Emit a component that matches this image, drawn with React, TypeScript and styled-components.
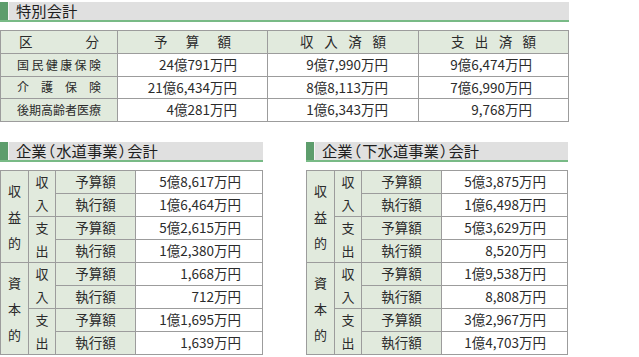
import React from "react";
import styled, { createGlobalStyle } from "styled-components";

const Global = createGlobalStyle`
  html, body { margin: 0; padding: 0; background: #fff; }
  body {
    font-family: "Noto Sans CJK JP", "Noto Sans", sans-serif;
    color: #2b2b2b;
  }
`;

const Page = styled.div`
  width: 639px;
  height: 357px;
  box-sizing: border-box;
  padding-top: 2px;
  display: flex;
  flex-direction: column;
  gap: 20px;
  overflow: hidden;
`;

const Row = styled.div`
  display: flex;
  gap: 43px;
`;

const Section = styled.section<{ $w: number }>`
  width: ${(p) => p.$w}px;
  display: flex;
  flex-direction: column;
  gap: 8px;
`;

const Heading = styled.h2`
  margin: 0;
  height: 18px;
  display: flex;
  align-items: center;
  background: #e0e0e0;
  border-bottom: 2px solid #78ba86;
  font-size: 15.3px;
  font-weight: 400;
  color: #1e1e1e;
  line-height: 1;
  &::before {
    content: "";
    align-self: stretch;
    width: 8px;
    background: #5d9d6c;
    border-right: 1px solid #f4f4f4;
    margin-right: 7px;
  }
`;

const Title = styled.span`
  white-space: nowrap;
  line-height: 1;
`;

const Paren = styled.span`
  font-feature-settings: "halt" 1;
  padding: 0 1px;
`;

const Table = styled.table`
  width: 100%;
  border-collapse: collapse;
  table-layout: fixed;
  border: 1px solid #858585;
  font-size: 13.5px;
  line-height: 1;
`;

const Tr = styled.tr<{ $h: number }>`
  height: ${(p) => p.$h}px;
`;

const Cell = styled.td<{ $label?: boolean; $pr?: number; $align?: string }>`
  border: 1px solid #9c9c9c;
  padding: 0 ${(p) => p.$pr ?? 0}px 0 0;
  background: ${(p) => (p.$label ? "#e1eadd" : "#fff")};
  text-align: ${(p) => p.$align ?? "center"};
  vertical-align: middle;
  color: #2b2b2b;
  white-space: nowrap;
`;

const Spread = styled.div<{ $px: number; $fs?: number }>`
  display: flex;
  justify-content: space-between;
  padding: 0 ${(p) => p.$px}px;
  font-size: ${(p) => p.$fs ?? 13.5}px;
`;

const VStack = styled.div<{ $gap: number }>`
  display: flex;
  flex-direction: column;
  align-items: center;
  gap: ${(p) => p.$gap}px;
  line-height: 13px;
  font-size: 13px;
`;

const Distributed: React.FC<{ text: string; px: number; fs?: number }> = ({ text, px, fs }) => (
  <Spread $px={px} $fs={fs}>
    {Array.from(text).map((c, i) => (
      <span key={i}>{c}</span>
    ))}
  </Spread>
);

const Vertical: React.FC<{ text: string; gap: number }> = ({ text, gap }) => (
  <VStack $gap={gap}>
    {Array.from(text).map((c, i) => (
      <span key={i}>{c}</span>
    ))}
  </VStack>
);

const HeadingText: React.FC<{ text: string }> = ({ text }) => (
  <Title>
    {Array.from(text).map((c, i) =>
      c === "（" || c === "）" ? <Paren key={i}>{c}</Paren> : c
    )}
  </Title>
);

const special = [
  { name: "国民健康保険", v: ["24億791万円", "9億7,990万円", "9億6,474万円"] },
  { name: "介護保険", v: ["21億6,434万円", "8億8,113万円", "7億6,990万円"] },
  { name: "後期高齢者医療", v: ["4億281万円", "1億6,343万円", "9,768万円"] },
];

const numPad = [30, 30, 36];

type Ent = { title: string; w: number; data: string[] };

const enterprises: Ent[] = [
  {
    title: "企業（水道事業）会計",
    w: 263,
    data: [
      "5億8,617万円",
      "1億6,464万円",
      "5億2,615万円",
      "1億2,380万円",
      "1,668万円",
      "712万円",
      "1億1,695万円",
      "1,639万円",
    ],
  },
  {
    title: "企業（下水道事業）会計",
    w: 262,
    data: [
      "5億3,875万円",
      "1億6,498万円",
      "5億3,629万円",
      "8,520万円",
      "1億9,538万円",
      "8,808万円",
      "3億2,967万円",
      "1億4,703万円",
    ],
  },
];

const EnterpriseTable: React.FC<{ e: Ent }> = ({ e }) => {
  const rows = e.data.map((val, i) => {
    const group = Math.floor(i / 4);
    const sub = Math.floor((i % 4) / 2);
    return (
      <Tr $h={23} key={i}>
        {i % 4 === 0 && (
          <Cell $label rowSpan={4}>
            <Vertical text={group === 0 ? "収益的" : "資本的"} gap={13} />
          </Cell>
        )}
        {i % 2 === 0 && (
          <Cell $label rowSpan={2}>
            <Vertical text={sub === 0 ? "収入" : "支出"} gap={10} />
          </Cell>
        )}
        <Cell $label>{i % 2 === 0 ? "予算額" : "執行額"}</Cell>
        <Cell $align="right" $pr={21}>
          {val}
        </Cell>
      </Tr>
    );
  });
  return (
    <Section $w={e.w}>
      <Heading>
        <HeadingText text={e.title} />
      </Heading>
      <Table>
        <colgroup>
          <col style={{ width: 28 }} />
          <col style={{ width: 27 }} />
          <col style={{ width: 80 }} />
          <col />
        </colgroup>
        <tbody>{rows}</tbody>
      </Table>
    </Section>
  );
};

export default function App() {
  return (
    <>
      <Global />
      <Page>
        <Section $w={569}>
          <Heading>
            <HeadingText text="特別会計" />
          </Heading>
          <Table>
            <colgroup>
              <col style={{ width: 117 }} />
              <col style={{ width: 150 }} />
              <col style={{ width: 151 }} />
              <col />
            </colgroup>
            <tbody>
              <Tr $h={23}>
                <Cell $label>
                  <Distributed text="区分" px={18} />
                </Cell>
                <Cell $label>
                  <Distributed text="予算額" px={36} />
                </Cell>
                <Cell $label>
                  <Distributed text="収入済額" px={32} />
                </Cell>
                <Cell $label>
                  <Distributed text="支出済額" px={32} />
                </Cell>
              </Tr>
              {special.map((r) => (
                <Tr $h={22.5} key={r.name}>
                  <Cell $label>
                    <Distributed text={r.name} px={16} fs={12} />
                  </Cell>
                  {r.v.map((v, j) => (
                    <Cell key={j} $align="right" $pr={numPad[j]}>
                      {v}
                    </Cell>
                  ))}
                </Tr>
              ))}
            </tbody>
          </Table>
        </Section>
        <Row>
          {enterprises.map((e) => (
            <EnterpriseTable key={e.title} e={e} />
          ))}
        </Row>
      </Page>
    </>
  );
}
